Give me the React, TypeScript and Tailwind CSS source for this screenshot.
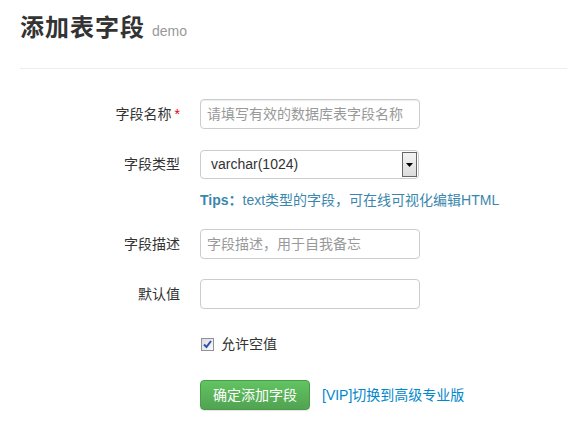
import React from "react";

const font = { fontFamily: '"Liberation Sans", "Noto Sans CJK SC", sans-serif' };

function Row({ label, required, children }: { label: string; required?: boolean; children: React.ReactNode }) {
  return (
    <div className="flex items-center">
      <div className="w-[200px] pr-[20px] text-right text-[14px] text-[#333]">
        {label}
        {required && <span className="text-[#e00] ml-[3px]">*</span>}
      </div>
      {children}
    </div>
  );
}

export default function App() {
  return (
    <div className="w-[567px] h-[429px] bg-white overflow-hidden" style={font}>
      <div className="pl-[20px] pt-[10px]">
        <div className="flex items-baseline h-[32px]">
          <span className="text-[24px] font-bold text-[#333] tracking-[1px]">添加表字段</span>
          <span className="ml-[7px] text-[14px] text-[#999]">demo</span>
        </div>
        <div className="mt-[26px] h-px bg-[#eee]" />
      </div>

      <div className="mt-[30px] flex flex-col">
        <Row label="字段名称" required>
          <div className="w-[220px] h-[30px] border border-[#ccc] rounded-[4px] flex items-center px-[6px] text-[14px] text-[#999] shadow-[inset_0_1px_1px_rgba(0,0,0,0.075)]">
            请填写有效的数据库表字段名称
          </div>
        </Row>

        <div className="mt-[21px]">
          <Row label="字段类型">
            <div className="w-[219px] h-[29px] border border-[#ccc] rounded-[4px] flex items-center pl-[10px] text-[14px] text-[#333] relative">
              varchar(1024)
              <div className="absolute right-[1px] top-[1px] bottom-[1px] w-[15px] border border-[#666] bg-gradient-to-b from-[#f3f3f3] to-[#dcdcdc] flex items-center justify-center">
                <svg width="7" height="4" viewBox="0 0 7 4">
                  <path d="M0 0h7L3.5 4z" fill="#000" />
                </svg>
              </div>
            </div>
          </Row>
        </div>

        <div className="pl-[200px] mt-[12px] text-[14px] text-[#3a87ad] leading-[18px]">
          <b>Tips：</b>text类型的字段，可在线可视化编辑HTML
        </div>

        <div className="mt-[20px]">
          <Row label="字段描述">
            <div className="w-[220px] h-[30px] border border-[#ccc] rounded-[4px] flex items-center px-[6px] text-[14px] text-[#999]">
              字段描述，用于自我备忘
            </div>
          </Row>
        </div>

        <div className="mt-[20px]">
          <Row label="默认值">
            <div className="w-[220px] h-[30px] border border-[#ccc] rounded-[4px]" />
          </Row>
        </div>

        <div className="mt-[25px] pl-[201px] flex items-center text-[14px] text-[#333]">
          <span className="w-[13px] h-[13px] border border-[#8f8f9d] bg-gradient-to-br from-[#dcdcdc] to-[#fafafa] flex items-center justify-center">
            <svg width="9" height="9" viewBox="0 0 9 9">
              <path d="M1 4.5L3.5 7L8 1" stroke="#2a4fb0" strokeWidth="2" fill="none" />
            </svg>
          </span>
          <span className="ml-[7px]">允许空值</span>
        </div>

        <div className="mt-[25px] pl-[200px] flex items-center">
          <div className="w-[110px] h-[30px] rounded-[4px] border border-[#4a9a4a] bg-gradient-to-b from-[#62c462] to-[#51a351] text-white text-[14px] flex items-center justify-center shadow-[0_1px_1px_rgba(0,0,0,0.1)]">
            确定添加字段
          </div>
          <span className="ml-[12px] text-[14px] text-[#0088cc]">[VIP]切换到高级专业版</span>
        </div>
      </div>
    </div>
  );
}
